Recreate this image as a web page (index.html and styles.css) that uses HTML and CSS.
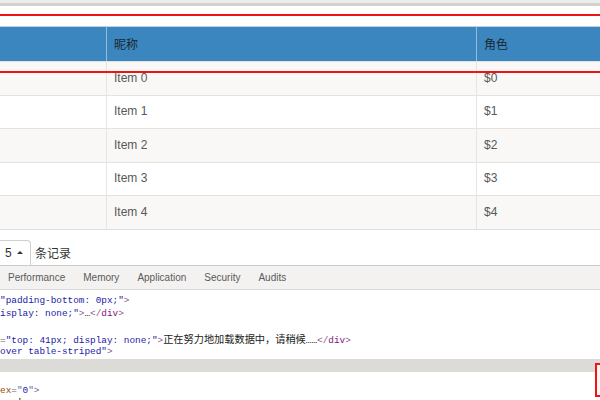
FILE: index.html
```html
<!DOCTYPE html>
<html>
<head>
<meta charset="utf-8">
<link rel="stylesheet" href="styles.css">
</head>
<body>
<div class="page">
  <div class="topbar"></div>
  <div class="spacer"></div>
  <table class="grid">
    <colgroup><col class="c1"><col class="c2"><col class="c3"></colgroup>
    <thead>
      <tr><th></th><th class="sep">昵称</th><th class="sep">角色</th></tr>
    </thead>
    <tbody>
      <tr class="striped"><td></td><td class="sep">Item 0</td><td class="sep">$0</td></tr>
      <tr><td></td><td class="sep">Item 1</td><td class="sep">$1</td></tr>
      <tr class="striped"><td></td><td class="sep">Item 2</td><td class="sep">$2</td></tr>
      <tr><td></td><td class="sep">Item 3</td><td class="sep">$3</td></tr>
      <tr class="striped"><td></td><td class="sep">Item 4</td><td class="sep">$4</td></tr>
    </tbody>
  </table>
  <div class="pager">
    <div class="size-btn"><span>5</span><span class="caret"></span></div>
    <span class="records">条记录</span>
  </div>
  <div class="devtools">
    <div class="tabs">
      <span class="tab">Performance</span>
      <span class="tab">Memory</span>
      <span class="tab">Application</span>
      <span class="tab">Security</span>
      <span class="tab">Audits</span>
    </div>
    <div class="code">
      <div class="line"><span class="val">"padding-bottom: 0px;"</span><span class="br">&gt;</span></div>
      <div class="line"><span class="val">isplay: none;"</span><span class="br">&gt;</span><span class="txt">…</span><span class="br">&lt;/</span><span class="tag">div</span><span class="br">&gt;</span></div>
      <div class="line"></div>
      <div class="line"><span class="eq">=</span><span class="val">"top: 41px; display: none;"</span><span class="br">&gt;</span><span class="cjk">正在努力地加载数据中，请稍候</span><span class="txt">……</span><span class="br">&lt;/</span><span class="tag">div</span><span class="br">&gt;</span></div>
      <div class="line"><span class="val">over table-striped"</span><span class="br">&gt;</span></div>
      <div class="line selected"></div>
      <div class="line"></div>
      <div class="line"><span class="attr">ex</span><span class="eq">=</span><span class="q">"</span><span class="val">0</span><span class="q">"</span><span class="br">&gt;</span></div>
      <div class="line"><span class="txt">·  '</span></div>
    </div>
  </div>
  <div class="red-line red-top"></div>
  <div class="red-line red-mid"></div>
  <div class="red-box"></div>
</div>
</body>
</html>
```
FILE: styles.css
```css
html, body {
  margin: 0;
  padding: 0;
  background: #fff;
}
.page {
  position: relative;
  width: 600px;
  height: 400px;
  overflow: hidden;
  display: flex;
  flex-direction: column;
  font-family: "Liberation Sans", "Noto Sans CJK SC", sans-serif;
}
.topbar {
  height: 3px;
  background: #ececec;
  border-bottom: 3px solid #d2d2d2;
  flex: none;
}
.spacer {
  height: 20px;
  flex: none;
}
.grid {
  width: 600px;
  table-layout: fixed;
  border-collapse: separate;
  border-spacing: 0;
  flex: none;
  font-size: 12px;
}
.c1 { width: 106px; }
.c2 { width: 370px; }
.c3 { width: 124px; }
.grid th {
  background: #3b86bf;
  color: #1c2630;
  font-weight: normal;
  text-align: left;
  padding: 8px 7px;
  line-height: 18px;
  border-top: 1px solid #bfd3e3;
  font-family: "Noto Sans CJK SC", sans-serif;
}
.grid th.sep {
  border-left: 1px solid #98bad6;
}
.grid td {
  color: #585858;
  padding: 7.5px 7px 8.5px;
  line-height: 16.5px;
  border-top: 1px solid #e4e2df;
}
.grid td.sep {
  border-left: 1px solid #e7e5e3;
}
.grid tbody tr:last-child td {
  border-bottom: 1px solid #e1dfdc;
}
.grid tr.striped td {
  background: #f9f8f7;
}
.pager {
  height: 35px;
  flex: none;
  display: flex;
  align-items: flex-end;
  gap: 4px;
}
.size-btn {
  margin-left: -10px;
  width: 41px;
  height: 25px;
  border: 1px solid #cfcfcf;
  border-bottom: none;
  border-radius: 0 4px 0 0;
  display: flex;
  align-items: center;
  padding-left: 14px;
  box-sizing: border-box;
  gap: 5px;
  font-size: 12px;
  color: #333;
}
.caret {
  width: 0;
  height: 0;
  border-left: 3px solid transparent;
  border-right: 3px solid transparent;
  border-bottom: 3px solid #333;
}
.records {
  font-size: 12px;
  color: #333;
  line-height: 25px;
  font-family: "Noto Sans CJK SC", sans-serif;
}
.devtools {
  flex: 1;
  display: flex;
  flex-direction: column;
  min-height: 0;
}
.tabs {
  height: 23px;
  background: #f3f2f1;
  border-top: 1px solid #cbcbcb;
  border-bottom: 1px solid #dadada;
  display: flex;
  align-items: center;
  margin-left: -1px;
  flex: none;
}
.tab {
  padding: 0 9px;
  font-size: 10px;
  color: #5a5a5a;
}
.code {
  padding-top: 5.2px;
  font-family: "Liberation Mono", monospace;
  font-size: 9.4px;
  color: #222;
}
.line {
  height: 12.85px;
  line-height: 12.85px;
  white-space: pre;
}
.line.selected {
  background: #dddbd7;
}
.val { color: #1a1aa6; }
.br { color: #8a5a8e; }
.tag { color: #881280; }
.attr { color: #994500; }
.eq { color: #666; }
.q { color: #5a6aa6; }
.txt { color: #222; }
.cjk {
  font-family: "Noto Sans CJK SC", sans-serif;
  font-size: 10.2px;
  color: #222;
}
.red-line {
  position: absolute;
  left: 0;
  right: 0;
  height: 2px;
  background: #ee1414;
}
.red-top { top: 14px; }
.red-mid { top: 71px; }
.red-box {
  position: absolute;
  left: 595px;
  top: 363px;
  width: 20px;
  height: 30px;
  border: 2px solid #ee1414;
  background: #fff6f6;
}
```
